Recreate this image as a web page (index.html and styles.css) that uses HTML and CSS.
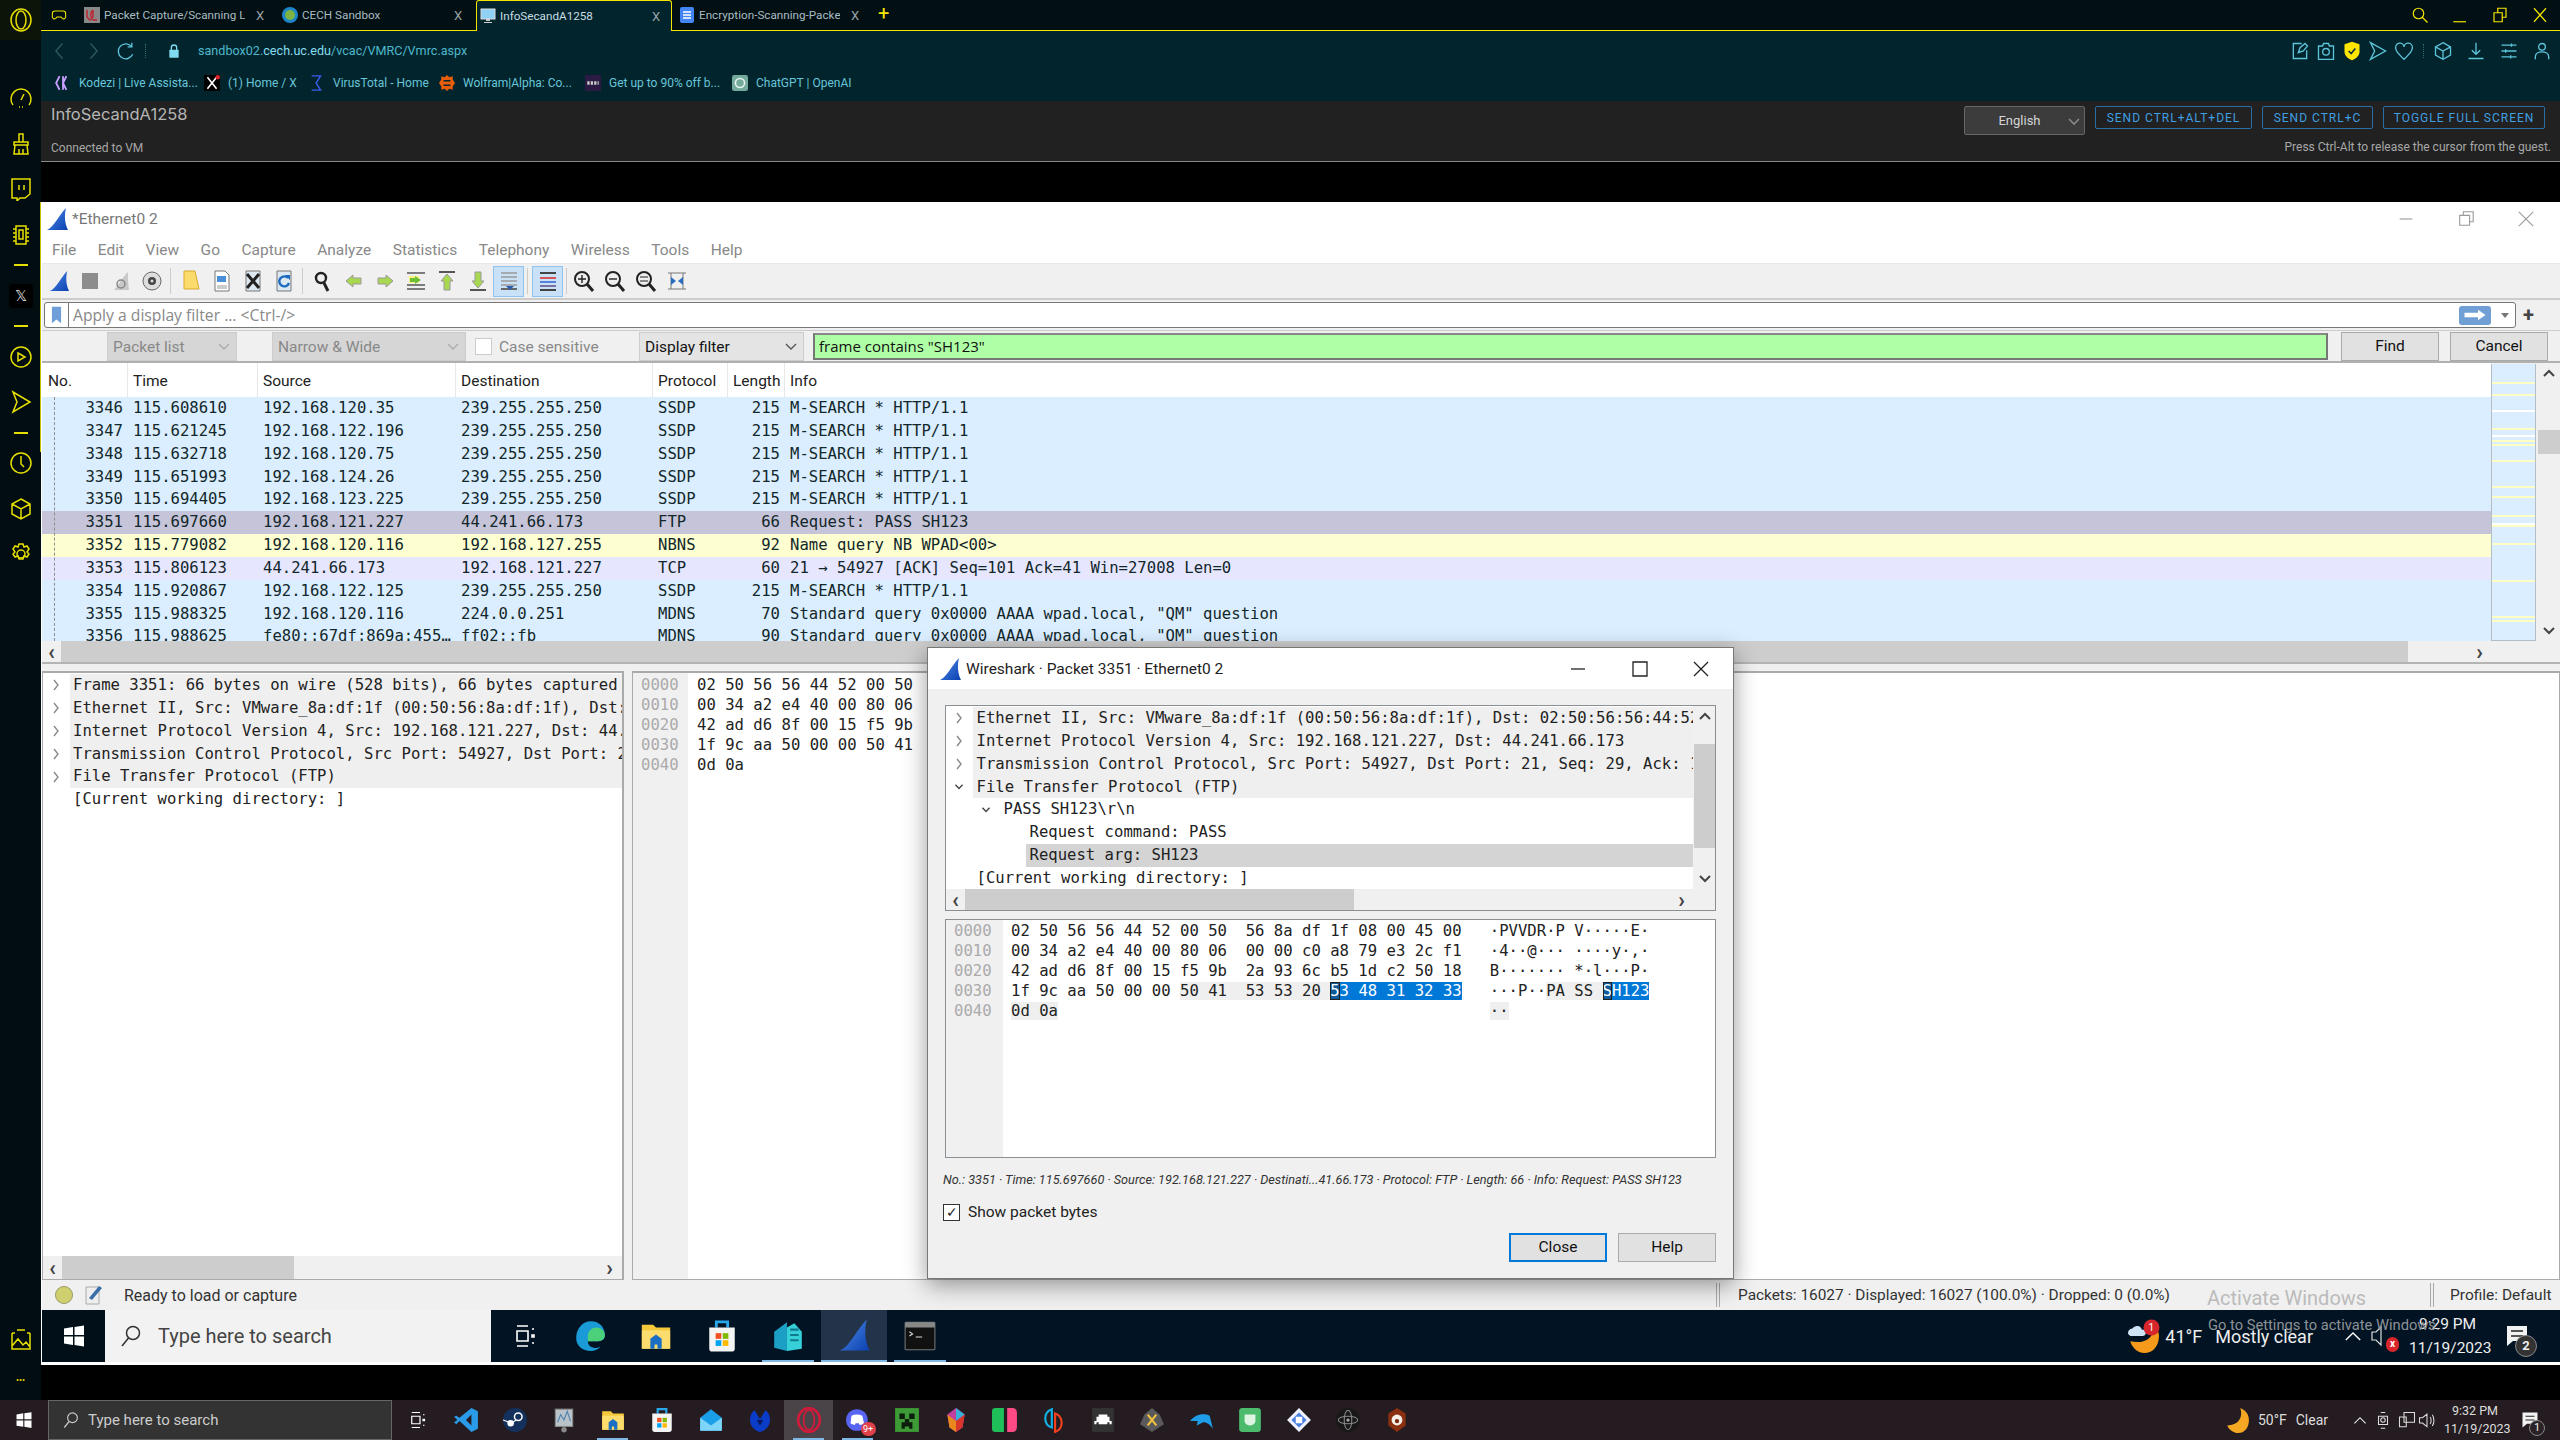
FILE: index.html
```html
<!DOCTYPE html>
<html>
<head>
    <title>InfoSecandA1258</title>
    <link rel="stylesheet" href="styles.css">
</head>
<body>
    <!-- shared icons -->
    <svg class="defs" width="0" height="0">
        <defs>
            <linearGradient id="finFill" x1="0" y1="0" x2="1" y2="1">
                <stop offset="0" stop-color="#4f8fe8"/>
                <stop offset="1" stop-color="#0a3fb0"/>
            </linearGradient>
            <symbol id="fin" viewBox="0 0 24 24"><path d="M2 23C9 20 14 8 21 1c-2 8-1 16 2 22z" fill="url(#finFill)"/></symbol>
            <symbol id="chevR" viewBox="0 0 10 14"><path d="M3 2l4 5-4 5" fill="none" stroke="#8a8a8a" stroke-width="1.4"/></symbol>
            <symbol id="chevD" viewBox="0 0 14 10"><path d="M2 2l5 5 5-5" fill="none" stroke="#444" stroke-width="2"/></symbol>
            <symbol id="chevU" viewBox="0 0 14 8"><path d="M2 7l5-5 5 5" fill="none" stroke="#444" stroke-width="2"/></symbol>
            <symbol id="win" viewBox="0 0 24 24"><path d="M2 4.5l9-1.4V11H2zM12.5 2.9L22 1.5V11h-9.5zM2 12.5h9v8.4l-9-1.4zM12.5 12.5H22v10l-9.5-1.4z" fill="#fff"/></symbol>
            <symbol id="glass" viewBox="0 0 24 24"><circle cx="14" cy="9" r="6.5" fill="none" stroke="currentColor" stroke-width="1.5"/><path d="M9.5 14L3 22" stroke="currentColor" stroke-width="1.6"/></symbol>
            <symbol id="folder" viewBox="0 0 24 24"><path d="M2 4h8l2 2h10v15H2z" fill="#f5c83c"/><path d="M2 8h20v13H2z" fill="#fbdc6c"/><path d="M8 14l4-3 4 3v7h-3v-3h-2v3H8z" fill="#1a6fc4"/></symbol>
            <symbol id="store" viewBox="0 0 24 24"><path d="M8 6V2h8v4" fill="none" stroke="#28a8ea" stroke-width="2"/><path d="M3 6h18v15a2 2 0 0 1-2 2H5a2 2 0 0 1-2-2z" fill="#f4f4f4"/><path d="M7.5 10h4v4h-4z" fill="#f25022"/><path d="M12.5 10h4v4h-4z" fill="#7fba00"/><path d="M7.5 15h4v4h-4z" fill="#00a4ef"/><path d="M12.5 15h4v4h-4z" fill="#ffb900"/></symbol>
            <symbol id="taskview" viewBox="0 0 24 24"><path d="M5 2h11M5 22h11M5 7h11v10H5zM20 5h2M20 11h2v2h-2zM20 19h2" fill="none" stroke="#fff" stroke-width="1.6"/></symbol>
            <symbol id="notif" viewBox="0 0 24 24"><path d="M2 2h20v15H8l-6 5z" fill="#f2f2f2"/><path d="M6 7h12M6 12h12" stroke="#222" stroke-width="1.4"/></symbol>
            <symbol id="moon" viewBox="0 0 24 24"><path d="M15 1C18 10 13 17 3 17C5 22 10 24 13 24C20 24 23 18 23 12C23 7 20 3 15 1Z" fill="#f5a623"/></symbol>
        </defs>
    </svg>

    <div class="desktop">
        <!-- opera side rail -->
        <div class="rail">
            <div class="rail-top">
                <svg class="rail-ico" viewBox="0 0 24 24"><ellipse cx="12" cy="12" rx="10" ry="11"/><ellipse cx="12" cy="12" rx="5" ry="9"/></svg>
            </div>
            <div class="rail-list">
                <div class="rail-group">
                    <svg class="rail-ico" viewBox="0 0 24 24"><path d="M4 19a10 10 0 1 1 16 0M12 14l3-6M10 21h1M13 21h1"/></svg>
                    <svg class="rail-ico" viewBox="0 0 24 24"><path d="M10 2h4v8h-4zM5 10h14v3H5zM6 13h12l1 9H5zM10 17v5M14 17v5"/></svg>
                    <svg class="rail-ico" viewBox="0 0 24 24"><path d="M3 2h18v15l-5 4h-5l-3 3v-3H3zM10 8v5M15 8v5"/></svg>
                    <svg class="rail-ico" viewBox="0 0 24 24"><path d="M7 3h10v18H7zM10 7h4v9h-4zM4 6h3M4 10h3M4 14h3M4 18h3M17 6h3M17 10h3M17 14h3M17 18h3"/></svg>
                </div>
                <div class="rail-dash"></div>
                <div class="rail-x">𝕏</div>
                <div class="rail-dash"></div>
                <div class="rail-group">
                    <svg class="rail-ico" viewBox="0 0 24 24"><circle cx="12" cy="12" r="10"/><path d="M9 8l7 4-7 4z"/></svg>
                    <svg class="rail-ico" viewBox="0 0 24 24"><path d="M4 2l17 10L4 22l4-10z"/></svg>
                </div>
                <div class="rail-dash"></div>
                <div class="rail-group">
                    <svg class="rail-ico" viewBox="0 0 24 24"><circle cx="12" cy="12" r="10"/><path d="M12 5v8l3 3"/></svg>
                    <svg class="rail-ico" viewBox="0 0 24 24"><path d="M12 2l9 5v10l-9 5-9-5V7zM3 7l9 5 9-5M12 12v10"/></svg>
                    <svg class="rail-ico" viewBox="0 0 24 24"><circle cx="12" cy="12" r="4"/><path d="M10 2h4l1 3 3-1 2 3-2 3 2 2-2 3-3-1-1 3h-4l-1-3-3 1-2-3 2-2-2-3 2-3 3 1z"/></svg>
                </div>
            </div>
            <div class="rail-bottom">
                <svg class="rail-ico" viewBox="0 0 24 24"><path d="M8 2h8M3 5v16h18V5M3 18l6-7 5 6 3-3 4 5M3 5h3M18 5h3"/></svg>
                <div class="rail-dots">•••</div>
            </div>
        </div>

        <div class="browser">
            <!-- tabs -->
            <div class="tabstrip">
                <div class="tab-space">
                    <svg class="ico-16 yellow-line" viewBox="0 0 24 24"><path d="M6 6h12a4 4 0 0 1 4 4v5a3 3 0 0 1-5 2l-2-2H9l-2 2a3 3 0 0 1-5-2v-5a4 4 0 0 1 4-4z"/></svg>
                </div>
                <div class="tab">
                    <svg class="ico-16" viewBox="0 0 16 16"><rect width="16" height="16" fill="#888"/><path d="M3 3v7l3 3 3-3V3M9 3c-3 2-3 8 0 10h4" fill="none" stroke="#c0202c" stroke-width="1.4"/></svg>
                    <span class="tab-title">Packet Capture/Scanning Lab</span><span class="tab-x">X</span>
                </div>
                <div class="tab">
                    <svg class="ico-16" viewBox="0 0 16 16"><circle cx="8" cy="8" r="8" fill="#1c86c8"/><circle cx="8" cy="8" r="5" fill="#7cb342"/></svg>
                    <span class="tab-title">CECH Sandbox</span><span class="tab-x">X</span>
                </div>
                <div class="tab tab-active">
                    <svg class="ico-16" viewBox="0 0 16 16"><rect x="1" y="1" width="14" height="10" fill="#8fd0f5" stroke="#ddd"/><path d="M6 11h4v2H6zM4 14h8v1H4z" fill="#ccc"/></svg>
                    <span class="tab-title">InfoSecandA1258</span><span class="tab-x">X</span>
                </div>
                <div class="tab">
                    <svg class="ico-16" viewBox="0 0 16 16"><rect x="1" width="14" height="16" rx="2" fill="#4285f4"/><path d="M4 5h8M4 8h8M4 11h8" stroke="#fff" stroke-width="1.4"/></svg>
                    <span class="tab-title">Encryption-Scanning-Packet</span><span class="tab-x">X</span>
                </div>
                <div class="tab-plus">+</div>
                <div class="win-btns">
                    <svg class="ico-18 yellow-line" viewBox="0 0 24 24"><circle cx="10" cy="10" r="7"/><path d="M15 15l7 7"/></svg>
                    <svg class="ico-18 yellow-line" viewBox="0 0 24 24"><path d="M3 21h17"/></svg>
                    <svg class="ico-18 yellow-line" viewBox="0 0 24 24"><path d="M4 9h11v12H4zM9 9V3h11v12h-5"/></svg>
                    <svg class="ico-18 yellow-line" viewBox="0 0 24 24"><path d="M4 3l16 18M20 3L4 21"/></svg>
                </div>
            </div>

            <!-- address + bookmarks -->
            <div class="navbox">
                <div class="nav-row">
                    <svg class="nav-ico dim" viewBox="0 0 24 24"><path d="M15 3l-8 9 8 9"/></svg>
                    <svg class="nav-ico dim" viewBox="0 0 24 24"><path d="M9 3l8 9-8 9"/></svg>
                    <svg class="nav-ico" viewBox="0 0 24 24"><path d="M19 7a9 9 0 1 0 1 9M19 2v5h-5"/></svg>
                    <div class="nav-sep"></div>
                    <svg class="ico-16 lock" viewBox="0 0 24 24"><path d="M8 11V7a4 4 0 0 1 8 0v4" fill="none" stroke="#7fdcf0" stroke-width="2"/><rect x="5" y="10" width="14" height="12" rx="1" fill="#7fdcf0"/></svg>
                    <span class="url">sandbox02.<b>cech.uc.edu</b>/vcac/VMRC/Vmrc.aspx</span>
                    <div class="nav-right">
                        <svg class="nav-ico" viewBox="0 0 24 24"><path d="M14 3H4v18h16V11M10 14l2-6 6-5 3 3-5 6z"/></svg>
                        <svg class="nav-ico" viewBox="0 0 24 24"><path d="M3 6h5l1-3h6l1 3h5v16H3z"/><circle cx="12" cy="13" r="4"/></svg>
                        <svg class="nav-ico" viewBox="0 0 24 24"><path d="M12 1l9 3v9c0 5-5 9-9 10-4-1-9-5-9-10V4z" fill="#ffe600" stroke="none"/><path d="M8 12l3 3 5-6" stroke="#12313a" stroke-width="2"/></svg>
                        <svg class="nav-ico" viewBox="0 0 24 24"><path d="M3 2l18 10L3 22l5-10z"/></svg>
                        <svg class="nav-ico" viewBox="0 0 24 24"><path d="M12 22C5 15 2 12 2 8a5 5 0 0 1 10-1 5 5 0 0 1 10 1c0 4-3 7-10 14z"/></svg>
                        <div class="nav-sep nav-sep-r"></div>
                        <svg class="nav-ico" viewBox="0 0 24 24"><path d="M12 2l9 5v10l-9 5-9-5V7zM3 7l9 5 9-5M12 12v10"/></svg>
                        <svg class="nav-ico nav-gap" viewBox="0 0 24 24"><path d="M12 2v14M7 11l5 5 5-5M3 21h18"/></svg>
                        <svg class="nav-ico nav-gap" viewBox="0 0 24 24"><path d="M3 5h18M3 12h18M3 19h18M15 3v4M8 10v4M14 17v4"/></svg>
                        <svg class="nav-ico nav-gap" viewBox="0 0 24 24"><circle cx="12" cy="7" r="4"/><path d="M4 22v-3c0-4 4-6 8-6s8 2 8 6v3"/></svg>
                    </div>
                </div>
                <div class="bookmarks">
                    <span class="bm bm-1"><svg class="ico-16" viewBox="0 0 14 14"><path d="M4 1L1 7l3 6M7 1v12M10 1L7 7l3 6" fill="none" stroke="#c9a0ff" stroke-width="1.6"/></svg>Kodezi | Live Assista...</span>
                    <span class="bm bm-2"><svg class="ico-16" viewBox="0 0 14 14"><rect width="14" height="14" fill="#000"/><path d="M3 2l8 10M11 2L3 12" stroke="#fff" stroke-width="1.4"/><circle cx="12" cy="2" r="2" fill="#e0252c"/></svg>(1) Home / X</span>
                    <span class="bm bm-3"><svg class="ico-16" viewBox="0 0 14 18"><path d="M1 1h10L6 9l5 8H1" fill="none" stroke="#3a5cf0" stroke-width="1.6"/></svg>VirusTotal - Home</span>
                    <span class="bm bm-4"><svg class="ico-16" viewBox="0 0 14 14"><path d="M7 0l2 2 3-1v3l2 3-2 3v3l-3-1-2 2-2-2-3 1v-3L0 7l2-3V1l3 1z" fill="#e85d0c"/><path d="M4 5h6M4 9h6" stroke="#02242c" stroke-width="1.4"/></svg>Wolfram|Alpha: Co...</span>
                    <span class="bm bm-5"><svg class="ico-16" viewBox="0 0 14 14"><rect width="14" height="14" fill="#2a1a44"/><path d="M2 7h10" stroke="#ccc" stroke-width="3" stroke-dasharray="2 1"/></svg>Get up to 90% off b...</span>
                    <span class="bm"><svg class="ico-16" viewBox="0 0 14 14"><rect width="14" height="14" rx="2" fill="#74aa9c"/><circle cx="7" cy="7" r="4" fill="none" stroke="#e8f4f0" stroke-width="1.4"/></svg>ChatGPT | OpenAI</span>
                </div>
            </div>

            <!-- vmrc header -->
            <div class="vmrc">
                <div class="vmrc-left">
                    <div class="vm-name">InfoSecandA1258</div>
                    <div class="vm-note">Connected to VM</div>
                </div>
                <div class="vmrc-right">
                    <div class="vmrc-actions">
                        <div class="lang">English<svg class="lang-caret" viewBox="0 0 14 10"><path d="M2 2l5 5 5-5" fill="none" stroke="#888" stroke-width="1.6"/></svg></div>
                        <div class="vm-btn vm-btn-1">SEND CTRL+ALT+DEL</div>
                        <div class="vm-btn vm-btn-2">SEND CTRL+C</div>
                        <div class="vm-btn vm-btn-3">TOGGLE FULL SCREEN</div>
                    </div>
                    <div class="vm-note vm-note-r">Press Ctrl-Alt to release the cursor from the guest.</div>
                </div>
            </div>

            <!-- the guest screen -->
            <div class="guest">
                <div class="ws">
                    <div class="ws-title">
                        <svg class="fin-22"><use href="#fin"/></svg>
                        <span class="ws-name">*Ethernet0 2</span>
                        <div class="ws-ctl">
                            <svg class="ctl" viewBox="0 0 20 20"><path d="M3 10h14"/></svg>
                            <svg class="ctl" viewBox="0 0 20 20"><path d="M3 6h11v11H3zM7 6V2h11v11h-4"/></svg>
                            <svg class="ctl" viewBox="0 0 20 20"><path d="M2 2l16 16M18 2L2 18"/></svg>
                        </div>
                    </div>
                    <div class="ws-menu">
                        <span>File</span><span>Edit</span><span>View</span><span>Go</span><span>Capture</span><span>Analyze</span><span>Statistics</span><span>Telephony</span><span>Wireless</span><span>Tools</span><span>Help</span>
                    </div>
                    <div class="ws-tools">
                        <div class="tb"><svg class="ico-22"><use href="#fin"/></svg></div>
                        <div class="tb"><svg class="ico-22" viewBox="0 0 22 22"><rect x="3" y="3" width="16" height="16" fill="#8d8d8d"/></svg></div>
                        <div class="tb"><svg class="ico-22" viewBox="0 0 22 22"><path d="M4 20C8 16 12 8 18 2c0 6 0 12 1 18z" fill="#c8c8c8"/><circle cx="11" cy="14" r="4" fill="none" stroke="#888" stroke-width="1.5"/></svg></div>
                        <div class="tb"><svg class="ico-22" viewBox="0 0 22 22"><circle cx="11" cy="11" r="9" fill="#ddd" stroke="#666"/><circle cx="11" cy="11" r="4" fill="#444"/><circle cx="11" cy="11" r="1.5" fill="#ddd"/></svg></div>
                        <div class="tb-sep"></div>
                        <div class="tb"><svg class="ico-22" viewBox="0 0 22 22"><path d="M4 1h11l4 18H4z" fill="#fbdb6b" stroke="#d9a92e"/></svg></div>
                        <div class="tb"><svg class="ico-22" viewBox="0 0 22 22"><path d="M4 1h10l4 4v16H4z" fill="#fff" stroke="#777"/><path d="M6 6h9v6H6z" fill="#4a90d9"/><path d="M6 15h10v4H6z" fill="#ccc"/></svg></div>
                        <div class="tb"><svg class="ico-22" viewBox="0 0 22 22"><path d="M4 1h14v20H4z" fill="#dde8f0" stroke="#777"/><path d="M5 4l12 14M17 4L5 18" stroke="#222" stroke-width="3"/></svg></div>
                        <div class="tb"><svg class="ico-22" viewBox="0 0 22 22"><path d="M4 1h14v20H4z" fill="#dde8f0" stroke="#777"/><path d="M15 8a5 5 0 1 0 1 5" fill="none" stroke="#1b6bc0" stroke-width="2.4"/><path d="M12 5h5v5z" fill="#1b6bc0"/></svg></div>
                        <div class="tb-sep"></div>
                        <div class="tb"><svg class="ico-22" viewBox="0 0 22 22"><circle cx="9" cy="8" r="5" fill="none" stroke="#222" stroke-width="2.4"/><path d="M12 13l4 8" stroke="#222" stroke-width="3"/></svg></div>
                        <div class="tb"><svg class="ico-22" viewBox="0 0 22 22"><path d="M3 11l7-6v3h8v6h-8v3z" fill="#a8d850" stroke="#999"/></svg></div>
                        <div class="tb"><svg class="ico-22" viewBox="0 0 22 22"><path d="M19 11l-7-6v3H4v6h8v3z" fill="#a8d850" stroke="#999"/></svg></div>
                        <div class="tb"><svg class="ico-22" viewBox="0 0 22 22"><path d="M2 3h18M2 19h18M2 15h18" stroke="#555" stroke-width="1.6"/><path d="M4 6h10v7H4z" fill="#fff27a"/><path d="M16 10l-6-4v2H5v4h5v2z" fill="#6cbf3a"/></svg></div>
                        <div class="tb"><svg class="ico-22" viewBox="0 0 22 22"><path d="M3 2h16" stroke="#555" stroke-width="2"/><path d="M11 4l6 7h-3v9H8v-9H5z" fill="#a8d850" stroke="#999"/></svg></div>
                        <div class="tb"><svg class="ico-22" viewBox="0 0 22 22"><path d="M3 20h16" stroke="#555" stroke-width="2"/><path d="M11 18l6-7h-3V2H8v9H5z" fill="#a8d850" stroke="#999"/></svg></div>
                        <div class="tb tb-on"><svg class="ico-22" viewBox="0 0 22 22"><path d="M3 3h16M3 7h16M3 11h16M3 15h16" stroke="#999" stroke-width="1.6"/><path d="M3 19h16" stroke="#666" stroke-width="2"/><path d="M8 16h8l-4 4z" fill="#2a5db0"/></svg></div>
                        <div class="tb-sep"></div>
                        <div class="tb tb-on"><svg class="ico-22" viewBox="0 0 22 22"><path d="M3 3h16" stroke="#444" stroke-width="2"/><path d="M3 8h16" stroke="#d8525a" stroke-width="2"/><path d="M3 12h16" stroke="#5a7fd8" stroke-width="2"/><path d="M3 16h16" stroke="#7a6fa0" stroke-width="2"/><path d="M3 20h16" stroke="#444" stroke-width="2"/></svg></div>
                        <div class="tb-sep tb-sep-s"></div>
                        <div class="tb"><svg class="ico-22" viewBox="0 0 22 22"><circle cx="9" cy="9" r="7" fill="#eee" stroke="#222" stroke-width="2"/><path d="M14 14l6 7" stroke="#222" stroke-width="3"/><path d="M5 9h8M9 5v8" stroke="#222" stroke-width="1.4"/></svg></div>
                        <div class="tb"><svg class="ico-22" viewBox="0 0 22 22"><circle cx="9" cy="9" r="7" fill="#eee" stroke="#222" stroke-width="2"/><path d="M14 14l6 7" stroke="#222" stroke-width="3"/><path d="M5 9h8" stroke="#222" stroke-width="1.4"/></svg></div>
                        <div class="tb"><svg class="ico-22" viewBox="0 0 22 22"><circle cx="9" cy="9" r="7" fill="#eee" stroke="#222" stroke-width="2"/><path d="M14 14l6 7" stroke="#222" stroke-width="3"/><path d="M5 7h8M5 11h8" stroke="#222" stroke-width="1.2"/></svg></div>
                        <div class="tb"><svg class="ico-22" viewBox="0 0 22 22"><path d="M2 3h18M2 19h18M5 3v16M17 3v16" stroke="#777"/><path d="M10 11L5 7v8zM12 11l5-4v8z" fill="#2a6dc0"/></svg></div>
                    </div>

                    <div class="filterbar">
                        <div class="filter-input">
                            <svg class="bm-mark" viewBox="0 0 12 18"><path d="M1 0h10v18l-5-4-5 4z" fill="#6e9fd8"/></svg>
                            <span class="filter-text">Apply a display filter ... &lt;Ctrl-/&gt;</span>
                            <div class="apply"><svg viewBox="0 0 32 16" class="apply-arrow"><path d="M2 5h18V1l10 7-10 7v-4H2z" fill="#fff"/></svg></div>
                            <div class="filter-caret"></div>
                        </div>
                        <div class="filter-plus">+</div>
                    </div>

                    <div class="findbar">
                        <div class="combo combo-off combo-a">Packet list<svg class="combo-caret" viewBox="0 0 14 10"><path d="M2 2l5 5 5-5" fill="none" stroke="#aaa" stroke-width="1.4"/></svg></div>
                        <div class="combo combo-off combo-b">Narrow &amp; Wide<svg class="combo-caret" viewBox="0 0 14 10"><path d="M2 2l5 5 5-5" fill="none" stroke="#aaa" stroke-width="1.4"/></svg></div>
                        <div class="check-off"></div>
                        <span class="case-label">Case sensitive</span>
                        <div class="combo combo-c">Display filter<svg class="combo-caret" viewBox="0 0 14 10"><path d="M2 2l5 5 5-5" fill="none" stroke="#555" stroke-width="1.4"/></svg></div>
                        <div class="find-input">frame contains "SH123"</div>
                        <div class="push push-find">Find</div>
                        <div class="push push-cancel">Cancel</div>
                    </div>

                    <!-- packet list -->
                    <div class="packets">
                        <div class="pk-main">
                            <div class="pk-head">
                                <span class="hd-no">No.</span><span>Time</span><span>Source</span><span>Destination</span><span>Protocol</span><span>Length</span><span class="hd-info">Info</span>
                            </div>
                            <div class="pk-body mono">
                                <div class="pk"><span class="r">3346</span><span>115.608610</span><span>192.168.120.35</span><span>239.255.255.250</span><span>SSDP</span><span class="r">215</span><span>M-SEARCH * HTTP/1.1</span></div>
                                <div class="pk"><span class="r">3347</span><span>115.621245</span><span>192.168.122.196</span><span>239.255.255.250</span><span>SSDP</span><span class="r">215</span><span>M-SEARCH * HTTP/1.1</span></div>
                                <div class="pk"><span class="r">3348</span><span>115.632718</span><span>192.168.120.75</span><span>239.255.255.250</span><span>SSDP</span><span class="r">215</span><span>M-SEARCH * HTTP/1.1</span></div>
                                <div class="pk"><span class="r">3349</span><span>115.651993</span><span>192.168.124.26</span><span>239.255.255.250</span><span>SSDP</span><span class="r">215</span><span>M-SEARCH * HTTP/1.1</span></div>
                                <div class="pk"><span class="r">3350</span><span>115.694405</span><span>192.168.123.225</span><span>239.255.255.250</span><span>SSDP</span><span class="r">215</span><span>M-SEARCH * HTTP/1.1</span></div>
                                <div class="pk pk-sel"><span class="r">3351</span><span>115.697660</span><span>192.168.121.227</span><span>44.241.66.173</span><span>FTP</span><span class="r">66</span><span>Request: PASS SH123</span></div>
                                <div class="pk pk-nbns"><span class="r">3352</span><span>115.779082</span><span>192.168.120.116</span><span>192.168.127.255</span><span>NBNS</span><span class="r">92</span><span>Name query NB WPAD&lt;00&gt;</span></div>
                                <div class="pk pk-tcp"><span class="r">3353</span><span>115.806123</span><span>44.241.66.173</span><span>192.168.121.227</span><span>TCP</span><span class="r">60</span><span>21 → 54927 [ACK] Seq=101 Ack=41 Win=27008 Len=0</span></div>
                                <div class="pk"><span class="r">3354</span><span>115.920867</span><span>192.168.122.125</span><span>239.255.255.250</span><span>SSDP</span><span class="r">215</span><span>M-SEARCH * HTTP/1.1</span></div>
                                <div class="pk"><span class="r">3355</span><span>115.988325</span><span>192.168.120.116</span><span>224.0.0.251</span><span>MDNS</span><span class="r">70</span><span>Standard query 0x0000 AAAA wpad.local, "QM" question</span></div>
                                <div class="pk"><span class="r">3356</span><span>115.988625</span><span>fe80::67df:869a:455…</span><span>ff02::fb</span><span>MDNS</span><span class="r">90</span><span>Standard query 0x0000 AAAA wpad.local, "QM" question</span></div>
                            </div>
                        </div>
                        <div class="pk-map"></div>
                        <div class="vscroll vscroll-main">
                            <svg class="sb-arrow"><use href="#chevU"/></svg>
                            <div class="vs-track"><div class="vs-thumb"></div></div>
                            <svg class="sb-arrow sb-flip"><use href="#chevU"/></svg>
                        </div>
                    </div>
                    <div class="hscroll hscroll-main">
                        <span class="arr">‹</span><div class="hs-thumb hs-thumb-main"></div><span class="arr arr-r">›</span>
                    </div>

                    <!-- details and bytes -->
                    <div class="panes">
                        <div class="pane-tree">
                            <div class="tree-rows mono">
                                <div class="tr tr-on"><svg class="tw"><use href="#chevR"/></svg><span>Frame 3351: 66 bytes on wire (528 bits), 66 bytes captured (528 bits) on interface</span></div>
                                <div class="tr tr-on"><svg class="tw"><use href="#chevR"/></svg><span>Ethernet II, Src: VMware_8a:df:1f (00:50:56:8a:df:1f), Dst: 02:50:56:56:44:52</span></div>
                                <div class="tr tr-on"><svg class="tw"><use href="#chevR"/></svg><span>Internet Protocol Version 4, Src: 192.168.121.227, Dst: 44.241.66.173</span></div>
                                <div class="tr tr-on"><svg class="tw"><use href="#chevR"/></svg><span>Transmission Control Protocol, Src Port: 54927, Dst Port: 21, Seq: 29, Ack: 1</span></div>
                                <div class="tr tr-on"><svg class="tw"><use href="#chevR"/></svg><span>File Transfer Protocol (FTP)</span></div>
                                <div class="tr"><span class="tw"></span><span>[Current working directory: ]</span></div>
                            </div>
                            <div class="hscroll hscroll-tree">
                                <span class="arr">‹</span><div class="hs-thumb hs-thumb-tree"></div><span class="arr arr-r">›</span>
                            </div>
                        </div>
                        <div class="pane-bytes">
                            <div class="hex-off mono">0000<br>0010<br>0020<br>0030<br>0040</div>
                            <div class="hex-body mono">02 50 56 56 44 52 00 50  56 8a df 1f 08 00 45 00<br>00 34 a2 e4 40 00 80 06  00 00 c0 a8 79 e3 2c f1<br>42 ad d6 8f 00 15 f5 9b  2a 93 6c b5 1d c2 50 18<br>1f 9c aa 50 00 00 50 41  53 53 20 53 48 31 32 33<br>0d 0a</div>
                        </div>
                    </div>

                    <div class="status">
                        <div class="led"></div>
                        <svg class="ico-22" viewBox="0 0 22 22"><path d="M3 3h13v17H3z" fill="#eee" stroke="#aaa"/><path d="M6 14L16 2l3 2L9 16z" fill="#3a6ea8"/></svg>
                        <span class="st-ready">Ready to load or capture</span>
                        <div class="st-sep"></div>
                        <span class="st-packets">Packets: 16027 · Displayed: 16027 (100.0%) · Dropped: 0 (0.0%)</span>
                        <span class="st-activate">Activate Windows</span>
                        <div class="st-sep st-sep-2"></div>
                        <span class="st-profile">Profile: Default</span>
                    </div>

                    <!-- guest taskbar -->
                    <div class="vm-task">
                        <div class="vm-start"><svg class="ico-24"><use href="#win"/></svg></div>
                        <div class="vm-search"><svg class="ico-24 dark"><use href="#glass"/></svg><span>Type here to search</span></div>
                        <div class="vm-app"><svg class="ico-24"><use href="#taskview"/></svg></div>
                        <div class="vm-app"><svg class="ico-34" viewBox="0 0 32 32"><path d="M3 18C3 9 9 2 17 2c8 0 13 6 13 13 0 4-3 6-8 6h-8c0 5 5 8 12 5-3 3-6 4-9 4-8 0-14-5-14-12z" fill="#1a9bd8"/><path d="M14 16c0-5 4-8 8-8 4 0 8 3 8 7 0 4-3 6-8 6h-8z" fill="#4cd07a"/></svg></div>
                        <div class="vm-app"><svg class="ico-34"><use href="#folder"/></svg></div>
                        <div class="vm-app"><svg class="ico-34"><use href="#store"/></svg></div>
                        <div class="vm-app vm-app-run"><svg class="ico-34" viewBox="0 0 32 32"><path d="M3 12l12-9v27l-12-3z" fill="#1c9fc4"/><path d="M15 8l7-4 7 8v16l-14 2z" fill="#35d0d8"/><path d="M18 10h8M18 15h8M18 20h8" stroke="#127a90" stroke-width="2"/></svg></div>
                        <div class="vm-app vm-app-on"><svg class="ico-34"><use href="#fin"/></svg></div>
                        <div class="vm-app vm-app-run"><svg class="ico-34" viewBox="0 0 32 32"><rect x="2" y="3" width="28" height="26" rx="1" fill="#111" stroke="#777"/><path d="M2 3h28v5H2z" fill="#888"/><path d="M6 12l3 2-3 2M12 17h6" stroke="#ddd" fill="none"/></svg></div>
                        <div class="vm-tray">
                            <span class="vm-weather"><svg class="ico-34" viewBox="0 0 32 32"><path d="M26 6C27 18 17 24 4 21C6 28 12 32 17 32C26 32 31 25 31 16C31 12 29 8 26 6Z" fill="#f59a1a"/><path d="M2 14a4 4 0 0 1 4-5 5 5 0 0 1 9 1 3 3 0 0 1 1 6H4z" fill="#cfe3f7"/><circle cx="24" cy="8" r="7.5" fill="#d7262c"/></svg><span class="wx-badge">1</span></span>
                            <span class="wx-temp">41°F</span>
                            <span class="wx-text">Mostly clear</span>
                            <svg class="vm-caret" viewBox="0 0 20 12"><path d="M2 10l8-8 8 8" fill="none" stroke="#fff" stroke-width="1.5"/></svg>
                            <span class="vm-sound"><svg class="ico-24" viewBox="0 0 24 24"><path d="M3 8h4l5-5v18l-5-5H3z" fill="none" stroke="#ddd" stroke-width="1.2"/></svg><span class="x-badge">x</span></span>
                            <div class="vm-clock"><div>9:29 PM</div><div>11/19/2023</div></div>
                            <span class="vm-notif"><svg class="ico-24"><use href="#notif"/></svg><span class="n-badge">2</span></span>
                        </div>
                    </div>

                    <!-- over the taskbar, as the real watermark is -->
                    <div class="go-settings">Go to Settings to activate Windows.</div>

                    <!-- packet dialog -->
                    <div class="dlg">
                        <div class="dlg-title">
                            <svg class="fin-22"><use href="#fin"/></svg>
                            <span class="dlg-name">Wireshark · Packet 3351 · Ethernet0 2</span>
                            <div class="dlg-ctl">
                                <svg class="ctl-d" viewBox="0 0 20 20"><path d="M3 10h14"/></svg>
                                <svg class="ctl-d" viewBox="0 0 20 20"><path d="M3 3h14v14H3z"/></svg>
                                <svg class="ctl-d" viewBox="0 0 20 20"><path d="M3 3l14 14M17 3L3 17"/></svg>
                            </div>
                        </div>
                        <div class="dlg-body">
                            <div class="dlg-tree">
                                <div class="dlg-rows">
                                    <div class="dlg-lines mono">
                                        <div class="tr tr-on"><svg class="tw"><use href="#chevR"/></svg><span>Ethernet II, Src: VMware_8a:df:1f (00:50:56:8a:df:1f), Dst: 02:50:56:56:44:52</span></div>
                                        <div class="tr tr-on"><svg class="tw"><use href="#chevR"/></svg><span>Internet Protocol Version 4, Src: 192.168.121.227, Dst: 44.241.66.173</span></div>
                                        <div class="tr tr-on"><svg class="tw"><use href="#chevR"/></svg><span>Transmission Control Protocol, Src Port: 54927, Dst Port: 21, Seq: 29, Ack: 1</span></div>
                                        <div class="tr tr-on"><svg class="tw"><use href="#chevD"/></svg><span>File Transfer Protocol (FTP)</span></div>
                                        <div class="tr tr-sub"><svg class="tw"><use href="#chevD"/></svg><span>PASS SH123\r\n</span></div>
                                        <div class="tr tr-sub2"><span>Request command: PASS</span></div>
                                        <div class="tr tr-sub2 tr-sel"><span>Request arg: SH123</span></div>
                                        <div class="tr"><span class="tw"></span><span>[Current working directory: ]</span></div>
                                    </div>
                                    <div class="vscroll vscroll-dlg">
                                        <svg class="sb-arrow"><use href="#chevU"/></svg>
                                        <div class="vs-track"><div class="vs-thumb"></div></div>
                                        <svg class="sb-arrow sb-flip"><use href="#chevU"/></svg>
                                    </div>
                                </div>
                                <div class="hscroll hscroll-dlg">
                                    <span class="arr">‹</span><div class="hs-thumb hs-thumb-dlg"></div><span class="arr arr-r">›</span>
                                </div>
                            </div>
                            <div class="dlg-hex mono">
                                <div class="hex-off hex-off-d">0000<br>0010<br>0020<br>0030<br>0040</div>
                                <div class="hex-body hex-body-d">02 50 56 56 44 52 00 50  56 8a df 1f 08 00 45 00   ·PVVDR·P V·····E·
00 34 a2 e4 40 00 80 06  00 00 c0 a8 79 e3 2c f1   ·4··@··· ····y·,·
42 ad d6 8f 00 15 f5 9b  2a 93 6c b5 1d c2 50 18   B······· *·l···P·
1f 9c aa 50 00 00 <i class="hl-grey">50 41  53 53 20 </i><i class="hl-blue"><i class="hl-cur">5</i>3 48 31 32 33</i>   ···P··<i class="hl-grey">PA SS </i><i class="hl-blue"><i class="hl-cur">S</i>H123</i>
<i class="hl-grey">0d 0a</i>                                              <i class="hl-grey">··</i></div>
                            </div>
                            <div class="dlg-info">No.: 3351 · Time: 115.697660 · Source: 192.168.121.227 · Destinati...41.66.173 · Protocol: FTP · Length: 66 · Info: Request: PASS SH123</div>
                            <div class="dlg-check"><span class="checkbox">✓</span>Show packet bytes</div>
                            <div class="dlg-btns">
                                <div class="push push-close">Close</div>
                                <div class="push push-help">Help</div>
                            </div>
                        </div>
                    </div>
                </div>
                <div class="guest-black"></div>
            </div>
        </div>
    </div>

    <!-- host taskbar -->
    <div class="host-task">
        <div class="host-start"><svg class="ico-18"><use href="#win"/></svg></div>
        <div class="host-search"><svg class="ico-18"><use href="#glass"/></svg><span>Type here to search</span></div>
        <div class="host-apps">
            <div class="ha"><svg class="ico-18"><use href="#taskview"/></svg></div>
            <div class="ha"><svg class="ico-26" viewBox="0 0 24 24"><path d="M17 1l6 3v16l-6 3L6 13l-3 3-2-2 3-2-3-3 2-1 3 2zM17 7l-5 5 5 5z" fill="#2a9be8"/></svg></div>
            <div class="ha"><svg class="ico-26" viewBox="0 0 24 24"><circle cx="12" cy="12" r="11" fill="#14305c"/><circle cx="15" cy="9" r="3.5" fill="none" stroke="#fff" stroke-width="1.4"/><circle cx="8" cy="15" r="3" fill="#fff"/><path d="M1 12l8 3 4-3" stroke="#fff" fill="none"/></svg></div>
            <div class="ha"><svg class="ico-26" viewBox="0 0 24 24"><rect x="4" y="2" width="16" height="16" fill="#b9c3c9" stroke="#888"/><path d="M6 14l3-7 3 5 3-8 3 9" fill="none" stroke="#4a7fb0"/><circle cx="12" cy="21" r="2.5" fill="#888"/></svg></div>
            <div class="ha ha-run"><svg class="ico-26"><use href="#folder"/></svg></div>
            <div class="ha"><svg class="ico-26"><use href="#store"/></svg></div>
            <div class="ha"><svg class="ico-26" viewBox="0 0 24 24"><path d="M2 10l10-8 10 8v12H2z" fill="#1a9ee8"/><path d="M2 10l10 7 10-7v12H2z" fill="#7fd4fa"/></svg></div>
            <div class="ha"><svg class="ico-26" viewBox="0 0 24 24"><path d="M7 3l5 8 5-8c3 2 5 6 4 11s-5 8-9 9c-4-1-8-4-9-9S4 5 7 3z" fill="#0a3cc8"/><path d="M9 12l3 5 3-5" fill="#041a5c"/></svg></div>
            <div class="ha ha-on"><svg class="ico-26" viewBox="0 0 24 24"><ellipse cx="12" cy="12" rx="10" ry="11" fill="none" stroke="#d01a3c" stroke-width="2.4"/><ellipse cx="12" cy="12" rx="5" ry="9" fill="none" stroke="#d01a3c" stroke-width="1.6"/></svg></div>
            <div class="ha ha-run"><span class="discord"><svg class="ico-26" viewBox="0 0 24 24"><circle cx="11" cy="12" r="10" fill="#5865f2"/><path d="M6 8c3-1.5 7-1.5 10 0l1.5 7c-2 1.5-3 1.5-4 1.5l-.7-1.5h-3l-.7 1.5c-1 0-2 0-4-1.5z" fill="#fff"/></svg><span class="d-badge">9+</span></span></div>
            <div class="ha"><svg class="ico-26" viewBox="0 0 24 24"><rect x="1" y="1" width="22" height="22" fill="#3e9a36"/><path d="M5 6h5v5H5zM14 6h5v5h-5zM10 11h4v3h3v6h-3v-2h-4v2H7v-6h3z" fill="#0d1f0c"/></svg></div>
            <div class="ha"><svg class="ico-26" viewBox="0 0 24 24"><path d="M12 1l8 6-2 12-6 4-6-4-2-12z" fill="#c040a0"/><path d="M12 1l8 6-8 6z" fill="#38b0d8"/><path d="M4 7l8 6v10l-6-4z" fill="#e8881c"/><path d="M12 13l8-6-2 12-6 4z" fill="#d8362c"/></svg></div>
            <div class="ha"><svg class="ico-26" viewBox="0 0 24 24"><path d="M3 1h8v22H3a3 3 0 0 1-3-3V4a3 3 0 0 1 3-3z" fill="#1fbf5a"/><path d="M14 1h5a4 4 0 0 1 4 4v14a4 4 0 0 1-4 4h-5z" fill="#ff4a86"/></svg></div>
            <div class="ha"><svg class="ico-26" viewBox="0 0 24 24"><path d="M10 2a9 9 0 0 0 0 17z" fill="none" stroke="#10b0e0" stroke-width="2"/><path d="M13 6a9 9 0 0 1 0 17z" fill="none" stroke="#f0401c" stroke-width="2"/></svg></div>
            <div class="ha"><svg class="ico-26" viewBox="0 0 24 24"><rect x="2" y="1" width="20" height="22" fill="#333"/><path d="M6 9h2V7h8v2h2v4h2v3h-2v-2h-2v2H8v-2H6v2H4v-3h2z" fill="#fff"/></svg></div>
            <div class="ha"><svg class="ico-26" viewBox="0 0 24 24"><path d="M12 1l7 6 4 9-11 7-11-7 4-9z" fill="#5a5a5a"/><path d="M8 7l8 10M16 7L8 17" stroke="#f0c040" stroke-width="2"/></svg></div>
            <div class="ha"><svg class="ico-26" viewBox="0 0 24 24"><path d="M2 13c4-6 12-8 18-5l3 12c-3-4-5-6-9-6l-6 3 1-4c-3 0-5 0-7 0z" fill="#1f9de8"/></svg></div>
            <div class="ha"><svg class="ico-26" viewBox="0 0 24 24"><rect x="2" y="1" width="20" height="22" rx="3" fill="#4cbb6c"/><path d="M7 7h10v6c0 2-2 4-5 4s-5-2-5-4z" fill="#dff5e4"/></svg></div>
            <div class="ha"><svg class="ico-26" viewBox="0 0 24 24"><path d="M12 1l11 11-11 11L1 12z" fill="#eef2ff"/><path d="M12 5l7 7-7 7-7-7z" fill="#4a7fe0"/><path d="M9 9h6v6H9z" fill="#fff"/></svg></div>
            <div class="ha"><svg class="ico-26" viewBox="0 0 24 24"><circle cx="12" cy="12" r="11" fill="#181818"/><ellipse cx="12" cy="12" rx="9" ry="3.5" fill="none" stroke="#888"/><ellipse cx="12" cy="12" rx="3.5" ry="9" fill="none" stroke="#888"/><circle cx="12" cy="12" r="1.5" fill="#aaa"/></svg></div>
            <div class="ha"><svg class="ico-26" viewBox="0 0 24 24"><path d="M12 1l8 5v11l-8 6-8-6V6z" fill="#8a2f10"/><circle cx="12" cy="12" r="5" fill="#f4f0e8"/><circle cx="12" cy="13" r="2" fill="#7a2a10"/></svg></div>
        </div>
        <div class="host-tray">
            <svg class="ico-26"><use href="#moon"/></svg>
            <span class="host-temp">50°F</span>
            <span class="host-wx">Clear</span>
            <svg class="host-caret" viewBox="0 0 20 12"><path d="M2 10l8-8 8 8" fill="none" stroke="#eee" stroke-width="1.6"/></svg>
            <svg class="ico-18 tray-line tray-cam" viewBox="0 0 24 24"><path d="M6 7h12v11H6zM9 2h6M9 23h6"/><circle cx="12" cy="12" r="3"/></svg>
            <svg class="ico-18 tray-line tray-net" viewBox="0 0 24 24"><path d="M8 2h14v13H8zM2 8h9v13H2zM6 21h0"/></svg>
            <svg class="ico-18 tray-line tray-vol" viewBox="0 0 24 24"><path d="M2 9h4l6-5v17l-6-5H2zM16 8c2 2 2 7 0 9M19 5c3 4 3 11 0 15"/></svg>
            <div class="host-clock"><div>9:32 PM</div><div>11/19/2023</div></div>
            <span class="host-notif"><svg class="ico-18"><use href="#notif"/></svg><span class="n-badge n-badge-s">1</span></span>
        </div>
    </div>
</body>
</html>
```

FILE: styles.css
```css
* {
    box-sizing: border-box;
}

body {
    margin: 0;
    width: 2560px;
    height: 1440px;
    overflow: hidden;
    background-color: #000;
    font-family: Roboto, Arial, sans-serif;
    display: flex;
    flex-direction: column;
}

.defs {
    position: absolute;
}

.mono {
    font-family: "DejaVu Sans Mono", "Liberation Mono", monospace;
    font-size: 15.6px;
    color: #222;
}

.ico-16 { width: 16px; height: 16px; flex: none; }
.ico-18 { width: 18px; height: 18px; flex: none; }
.ico-22 { width: 22px; height: 22px; flex: none; }
.ico-24 { width: 24px; height: 24px; flex: none; }
.ico-26 { width: 26px; height: 26px; flex: none; }
.ico-34 { width: 34px; height: 34px; flex: none; }

.yellow-line {
    fill: none;
    stroke: #f2e600;
    stroke-width: 1.6;
}

.desktop {
    display: flex;
    height: 1400px;
}

/* side rail */
.rail {
    width: 41px;
    flex: none;
    background-color: #010d11;
    display: flex;
    flex-direction: column;
    align-items: center;
}

.rail-top {
    width: 100%;
    height: 40px;
    background-color: #0c140a;
    display: flex;
    align-items: center;
    justify-content: center;
}

.rail-ico {
    width: 24px;
    height: 24px;
    fill: none;
    stroke: #e6de00;
    stroke-width: 1.5;
    flex: none;
}

.rail-list {
    margin-top: 46px;
    display: flex;
    flex-direction: column;
    align-items: center;
    gap: 17.5px;
}

.rail-group {
    display: flex;
    flex-direction: column;
    gap: 21.5px;
}

.rail-dash {
    width: 14px;
    height: 2px;
    background-color: #e6de00;
}

.rail-x {
    width: 24px;
    height: 24px;
    background-color: #000;
    color: #ddd;
    border-radius: 4px;
    font-size: 15px;
    line-height: 24px;
    text-align: center;
}

.rail-bottom {
    margin-top: auto;
    margin-bottom: 16px;
    display: flex;
    flex-direction: column;
    align-items: center;
    gap: 24px;
}

.rail-dots {
    color: #e6de00;
    font-size: 9px;
    line-height: 8px;
}

.browser {
    flex: 1;
    display: flex;
    flex-direction: column;
    min-width: 0;
}

/* tabs */
.tabstrip {
    height: 31px;
    flex: none;
    display: flex;
    align-items: stretch;
    background-color: #020f13;
    border-bottom: 1px solid #f2e600;
}

.tab-space {
    width: 39px;
    display: flex;
    align-items: center;
    padding-left: 10px;
}

.tab {
    width: 198px;
    display: flex;
    align-items: center;
    padding-left: 4px;
    gap: 4px;
    color: #a9bcc2;
    font-size: 11.7px;
}

.tab-title {
    width: 141px;
    overflow: hidden;
    white-space: nowrap;
}

.tab-x {
    font-size: 13px;
    color: #99a5a8;
    margin-left: 7px;
}

.tab-active {
    height: 31px;
    background-color: #02242c;
    border: 1px solid #f2e600;
    border-bottom: none;
    border-radius: 3px 3px 0 0;
    padding-left: 3px;
    color: #c8dde2;
    width: 196px;
}

.tab-active + .tab {
    padding-left: 7px;
}

.tab-plus {
    color: #f2e600;
    font-size: 20px;
    margin-left: 8px;
    line-height: 26px;
}

.win-btns {
    margin-left: auto;
    width: 149px;
    padding-right: 11px;
    display: flex;
    align-items: center;
    justify-content: space-between;
}

/* address bar */
.navbox {
    height: 70px;
    flex: none;
    background-color: #02242c;
}

.nav-row {
    height: 39px;
    display: flex;
    align-items: center;
    padding-left: 9px;
    gap: 13px;
}

.nav-ico {
    width: 20px;
    height: 20px;
    fill: none;
    stroke: #5cc4da;
    stroke-width: 1.6;
    flex: none;
}

.nav-ico.dim {
    stroke: #2d5a64;
}

.nav-sep {
    width: 1px;
    height: 14px;
    border-left: 1px dotted #2f6a70;
    margin: 0 0 0 -4px;
}

.lock {
    margin-left: 7px;
    margin-right: 3px;
}

.url {
    color: #4fb8cc;
    font-size: 12.6px;
}

.url b {
    font-weight: 400;
    color: #85dff0;
}

.nav-right {
    margin-left: auto;
    display: flex;
    align-items: center;
    gap: 6px;
    padding-right: 8px;
}

.nav-sep-r {
    margin: 0 3px;
}

.nav-gap {
    margin-left: 7px;
}

.bookmarks {
    height: 26px;
    display: flex;
    align-items: center;
    padding-left: 14px;
    color: #67c6d9;
    font-size: 12px;
}

.bm {
    display: flex;
    align-items: center;
    gap: 8px;
    white-space: nowrap;
    width: 154px;
}

.bm-1 { width: 149px; }
.bm-2 { width: 105px; }
.bm-3 { width: 130px; }
.bm-4 { width: 146px; }
.bm-5 { width: 147px; }

/* vmrc head */
.vmrc {
    height: 61px;
    flex: none;
    background-color: #212121;
    border-bottom: 1px solid #888;
    display: flex;
    justify-content: space-between;
    padding: 5px 9px 0 10px;
}

.vmrc-left {
    display: flex;
    flex-direction: column;
}

.vm-name {
    color: #b5b5b5;
    font-size: 16.5px;
    font-family: Inter, Roboto, sans-serif;
    line-height: 16px;
    height: 31px;
}

.vm-note {
    color: #a8a8a8;
    font-size: 12px;
    line-height: 16px;
    margin-top: 3px;
}

.vmrc-right {
    display: flex;
    flex-direction: column;
    align-items: flex-end;
}

.vmrc-actions {
    display: flex;
    gap: 10px;
    height: 29px;
    margin-right: 6px;
    align-items: flex-start;
}

.lang {
    width: 121px;
    height: 29px;
    background-color: #3c3c3c;
    border: 1px solid #666;
    border-radius: 2px;
    color: #d5d5d5;
    font-size: 13px;
    line-height: 28px;
    text-align: center;
    padding-right: 10px;
    position: relative;
}

.lang-caret {
    position: absolute;
    right: 3px;
    top: 10px;
    width: 14px;
    height: 10px;
}

.vm-btn {
    height: 23px;
    border: 1px solid #2a6ea8;
    border-radius: 2px;
    color: #3f9fe0;
    font-size: 12px;
    letter-spacing: 1px;
    line-height: 22px;
    text-align: center;
    white-space: nowrap;
}

.vm-btn-1 { width: 157px; }
.vm-btn-2 { width: 111px; }
.vm-btn-3 { width: 162px; }

.vm-note-r {
    margin-top: 4px;
}

/* guest area */
.guest {
    flex: 1;
    display: flex;
    flex-direction: column;
    padding-top: 40px;
}

.guest-black {
    flex: 1;
}

.ws {
    height: 1163px;
    flex: none;
    position: relative;
    display: flex;
    flex-direction: column;
    background-color: #f0f0f0;
    border-left: 1px solid #fff;
    border-bottom: 3px solid #fff;
    font-size: 15.5px;
    color: #222;
}

.ws::before {
    content: "";
    position: absolute;
    left: -2px;
    top: 0;
    width: 1px;
    height: 250px;
    background-color: #c8c000;
}

.ws-title {
    height: 33px;
    flex: none;
    background-color: #fff;
    display: flex;
    align-items: center;
    padding-left: 3px;
}

.fin-22 {
    width: 24px;
    height: 24px;
    flex: none;
}

.ws-name {
    margin-left: 3px;
    color: #777;
}

.ws-ctl {
    margin-left: auto;
    width: 163px;
    padding-right: 25px;
    display: flex;
    justify-content: space-between;
}

.ctl {
    width: 18px;
    height: 18px;
    fill: none;
    stroke: #999;
    stroke-width: 1.2;
}

.ws-menu {
    height: 28px;
    flex: none;
    background-color: #fff;
    display: flex;
    align-items: center;
    padding: 1px 0 0 10px;
    gap: 21.5px;
    color: #888;
}

.ws-tools {
    height: 37px;
    flex: none;
    display: flex;
    align-items: center;
    padding-left: 1px;
    border-top: 1px solid #e8e8e8;
    border-bottom: 2px solid #ccc;
}

.tb {
    width: 31px;
    height: 31px;
    flex: none;
    display: flex;
    align-items: center;
    justify-content: center;
}

.tb-on {
    background-color: #c9e1f7;
    border: 1px solid #8fc3f0;
}

.tb-sep {
    width: 8px;
    height: 26px;
    flex: none;
    position: relative;
}

.tb-sep::after {
    content: "";
    position: absolute;
    left: 3px;
    top: 0;
    bottom: 0;
    border-left: 1px solid #ccc;
}

.tb-sep-s {
    width: 5px;
}

/* filter */
.filterbar {
    height: 31px;
    flex: none;
    display: flex;
    align-items: center;
    padding-left: 2px;
    border-bottom: 1px solid #ccc;
}

.filter-input {
    width: 2472px;
    height: 26px;
    background-color: #fff;
    border: 1px solid #777;
    border-radius: 3px;
    display: flex;
    align-items: center;
}

.bm-mark {
    width: 24px;
    height: 24px;
    flex: none;
    padding: 3px 6px;
    border-right: 1px solid #777;
}

.filter-text {
    margin-left: 4px;
    color: #888;
    font-family: "Open Sans", Roboto, sans-serif;
    font-size: 15.7px;
}

.apply {
    margin-left: auto;
    width: 32px;
    height: 19px;
    background-color: #6f9fd4;
    border-radius: 3px;
    display: flex;
    align-items: center;
    justify-content: center;
}

.apply-arrow {
    width: 24px;
    height: 12px;
}

.filter-caret {
    margin: 0 6px 0 10px;
    border-left: 4px solid transparent;
    border-right: 4px solid transparent;
    border-top: 5px solid #777;
}

.filter-plus {
    margin-left: 7px;
    font-size: 20px;
    font-weight: 700;
    color: #444;
    line-height: 22px;
}

/* find bar */
.findbar {
    height: 32px;
    flex: none;
    display: flex;
    align-items: center;
    padding: 1px 0 0 65px;
    border-bottom: 2px solid #b0b0b0;
}

.combo {
    height: 29px;
    display: flex;
    align-items: center;
    padding-left: 5px;
    position: relative;
    border: 1px solid #ccc;
    background-color: #e4e4e4;
}

.combo-off {
    background-color: #d6d6d6;
    color: #888;
}

.combo-a { width: 130px; }
.combo-b { width: 194px; margin-left: 35px; }
.combo-c { width: 165px; margin-left: 42px; color: #111; }

.combo-caret {
    position: absolute;
    right: 5px;
    top: 9px;
    width: 14px;
    height: 10px;
}

.check-off {
    width: 17px;
    height: 17px;
    margin-left: 9px;
    background-color: #fff;
    border: 1px solid #ccc;
}

.case-label {
    width: 98px;
    margin-left: 7px;
    color: #888;
    white-space: nowrap;
}

.find-input {
    width: 1515px;
    height: 27px;
    margin-left: 9px;
    background-color: #afffa6;
    border: 2px solid #777;
    border-top-color: #888;
    padding-left: 4px;
    line-height: 22px;
    font-family: "Open Sans", Roboto, sans-serif;
    font-size: 15px;
    color: #111;
}

.push {
    height: 29px;
    border: 1px solid #aaa;
    background-color: #e1e1e1;
    line-height: 27px;
    text-align: center;
    color: #111;
    width: 98px;
}

.push-find { margin-left: 13px; }
.push-cancel { margin-left: 11px; }

/* packet list */
.packets {
    height: 278px;
    flex: none;
    display: flex;
    background-color: #f0f0f0;
}

.pk-main {
    width: 2449px;
    flex: none;
    display: flex;
    flex-direction: column;
    background-color: #fff;
    overflow: hidden;
}

.pk-head,
.pk {
    display: grid;
    grid-template-columns: 86px 130px 198px 197px 75px 57px 1fr;
}

.pk-head {
    height: 34px;
    flex: none;
    background-color: #fff;
    color: #222;
}

.pk-head span {
    line-height: 36px;
    padding-left: 5px;
    border-right: 1px solid #e8e8e8;
    overflow: hidden;
    white-space: nowrap;
}

.pk-head .hd-no {
    padding-left: 6px;
}

.pk-head .hd-info {
    border-right: none;
}

.pk-body {
    position: relative;
    flex: 1;
    overflow: hidden;
}

.pk-body::before {
    content: "";
    position: absolute;
    left: 12px;
    top: 0;
    bottom: 0;
    border-left: 1px dashed #8c8c8c;
}

.pk {
    height: 22.85px;
    line-height: 22.85px;
    background-color: #daeeff;
    color: #12272a;
}

.pk span {
    padding-left: 5px;
    overflow: hidden;
    white-space: nowrap;
}

.pk .r {
    padding: 0 5px 0 0;
    text-align: right;
}

.pk-sel { background-color: #c6c4d8; }
.pk-nbns { background-color: #feffd0; }
.pk-tcp { background-color: #e7e6ff; }

.pk-map {
    width: 45px;
    flex: none;
    margin-top: 1px;
    border: 1px solid #b4bcc4;
    border-top: none;
    background-image: linear-gradient(to bottom,
        #daeeff 18px, #ffffc4 18px 20px, #daeeff 20px 30px, #ffffc4 30px 32px,
        #daeeff 32px 46px, #fff 46px 48px, #daeeff 48px 64px, #ffffc4 64px 66px,
        #daeeff 66px 71px, #fff 71px 73px, #daeeff 73px 76px, #ffffc4 76px 78px,
        #daeeff 78px 80px, #ffffc4 80px 82px, #daeeff 82px 96px, #ffffc4 96px 98px,
        #daeeff 98px 122px, #ffffc4 122px 124px, #daeeff 124px 132px, #ffffc4 132px 134px,
        #daeeff 134px 151px, #ffffc4 151px 153px, #daeeff 153px 159px, #fff 159px 161px,
        #ffffc4 161px 163px, #daeeff 163px 179px, #ffffc4 179px 181px, #daeeff 181px 216px,
        #ffffc4 216px 218px, #daeeff 218px 252px, #ffffc4 252px 254px, #daeeff 254px 256px,
        #ffffc4 256px 258px, #daeeff 258px);
}

.vscroll {
    display: flex;
    flex-direction: column;
    align-items: center;
    background-color: #f0f0f0;
    flex: none;
}

.vscroll-main {
    width: 24px;
    margin-left: 1px;
}

.vs-track {
    flex: 1;
    width: 100%;
    position: relative;
}

.vs-thumb {
    position: absolute;
    left: 1px;
    right: 1px;
    background-color: #cdcdcd;
}

.vscroll-main .vs-thumb {
    top: 47px;
    height: 24px;
}

.sb-arrow {
    width: 14px;
    height: 20px;
    flex: none;
    padding: 6px 0;
}

.sb-flip {
    transform: scaleY(-1);
}

.hscroll {
    height: 22px;
    flex: none;
    display: flex;
    align-items: center;
    position: relative;
    background-color: #f0f0f0;
}

.arr {
    width: 19px;
    flex: none;
    text-align: center;
    font-size: 22px;
    font-weight: 700;
    line-height: 18px;
    color: #444;
}

.arr-r {
    position: absolute;
}

.hs-thumb {
    height: 100%;
    background-color: #cdcdcd;
}

.hscroll-main { border-bottom: 2px solid #b4b4b4; height: 23px; }
.hs-thumb-main { width: 2347px; }
.hscroll-main .arr-r { left: 2428px; }

/* details and bytes */
.panes {
    height: 609px;
    margin-top: 7px;
    flex: none;
    display: flex;
    gap: 8px;
}

.pane-tree {
    width: 582px;
    flex: none;
    border: 1px solid #aaa;
    border-top: 2px solid #aaa;
    border-right: 2px solid #aaa;
    background-color: #fff;
    display: flex;
    flex-direction: column;
}

.tree-rows {
    flex: 1;
    overflow: hidden;
    padding-top: 1px;
}

.tr {
    height: 22.85px;
    line-height: 22.85px;
    display: flex;
    align-items: center;
    overflow: hidden;
    color: #222;
    white-space: nowrap;
}

.tr > span:last-child {
    flex: 1;
    padding-left: 3px;
}

.tw {
    width: 27px;
    height: 14px;
    flex: none;
    padding-left: 8px;
    padding-right: 9px;
}

.tr-on > span {
    background-color: #efefef;
}

.hscroll-tree {
    height: 23px;
}

.hs-thumb-tree { width: 232px; }
.hscroll-tree .arr-r { left: 557px; }

.pane-bytes {
    flex: 1;
    border: 1px solid #aaa;
    border-top: 2px solid #aaa;
    background-color: #fff;
    display: flex;
}

.hex-off {
    width: 55px;
    flex: none;
    background-color: #f0f0f0;
    color: #aaa;
    padding: 2px 0 0 8px;
    line-height: 20.1px;
}

.hex-body {
    flex: 1;
    padding: 2px 0 0 9px;
    line-height: 20.1px;
    white-space: pre;
}

/* status */
.status {
    height: 30px;
    flex: none;
    display: flex;
    align-items: center;
    padding-left: 13px;
    color: #333;
}

.led {
    width: 18px;
    height: 18px;
    border-radius: 50%;
    background-color: #cfcf70;
    border: 1px solid #9a9a66;
    margin-right: 10px;
}

.st-ready {
    margin-left: 19px;
    white-space: nowrap;
    font-size: 16px;
}

.st-sep {
    width: 4px;
    height: 24px;
    border-left: 1px solid #aaa;
    border-right: 1px solid #aaa;
    margin-left: auto;
}

.st-packets {
    margin-left: 18px;
    width: 469px;
    white-space: nowrap;
    font-size: 15.4px;
}

.st-activate {
    width: 223px;
    font-size: 20px;
    color: #bbb;
    white-space: nowrap;
    padding-top: 6px;
}

.st-sep-2 {
    margin-left: 0;
}

.st-profile {
    margin-left: 16px;
    width: 110px;
    white-space: nowrap;
}

/* guest taskbar */
.vm-task {
    height: 52px;
    flex: none;
    background-color: #021424;
    display: flex;
    align-items: center;
    color: #eee;
}

.vm-start {
    width: 63px;
    height: 100%;
    display: flex;
    align-items: center;
    justify-content: center;
    background-color: #011018;
    flex: none;
}

.vm-search {
    width: 386px;
    height: 100%;
    background-color: #f2f2f2;
    display: flex;
    align-items: center;
    padding-left: 14px;
    gap: 15px;
    color: #444;
    font-size: 20px;
    flex: none;
}

.dark {
    color: #333;
}

.vm-app {
    width: 66px;
    height: 100%;
    display: flex;
    align-items: center;
    justify-content: center;
    flex: none;
}

.vm-app-on {
    background-color: #23344a;
    border-bottom: 2px solid #7fb8e4;
}

.vm-app-run {
    position: relative;
}

.vm-app-run::after {
    content: "";
    position: absolute;
    left: 7px;
    right: 7px;
    bottom: 0;
    height: 2px;
    background-color: #7fb8e4;
}

.vm-tray {
    margin-left: auto;
    display: flex;
    align-items: center;
    padding-right: 31px;
    height: 100%;
}

.vm-weather {
    position: relative;
    display: flex;
}

.wx-badge {
    position: absolute;
    left: 18px;
    top: 3px;
    width: 14px;
    text-align: center;
    color: #fff;
    font-size: 10px;
    line-height: 12px;
}

.wx-temp {
    margin-left: 5px;
    font-size: 18px;
}

.wx-text {
    margin-left: 13px;
    font-size: 18px;
}

.vm-caret {
    width: 18px;
    height: 11px;
    margin-left: 31px;
}

.vm-sound {
    position: relative;
    display: flex;
    margin-left: 7px;
    width: 24px;
}

.x-badge {
    position: absolute;
    right: -6px;
    bottom: -4px;
    width: 13px;
    height: 15px;
    border-radius: 7px;
    background-color: #d8262c;
    color: #fff;
    font-size: 10px;
    font-weight: 700;
    line-height: 13px;
    text-align: center;
}

.vm-clock {
    margin-left: 16px;
    width: 77px;
    text-align: center;
    font-size: 15.5px;
    line-height: 24px;
}

.vm-notif {
    position: relative;
    display: flex;
    margin-left: 19px;
}

.n-badge {
    position: absolute;
    right: -8px;
    bottom: -9px;
    width: 22px;
    height: 22px;
    border-radius: 50%;
    border: 1px solid #888;
    background-color: #333;
    color: #eee;
    font-size: 13px;
    font-weight: 700;
    line-height: 20px;
    text-align: center;
}

.go-settings {
    position: absolute;
    left: 2166px;
    bottom: 28px;
    font-size: 14.7px;
    color: #8d9296;
    white-space: nowrap;
}

/* packet dialog */
.dlg {
    position: absolute;
    left: 885px;
    top: 445px;
    width: 807px;
    height: 632px;
    background-color: #f0f0f0;
    border: 1px solid #777;
    box-shadow: 0 6px 22px rgba(0, 0, 0, 0.4);
    display: flex;
    flex-direction: column;
}

.dlg-title {
    height: 41px;
    flex: none;
    background-color: #fff;
    display: flex;
    align-items: center;
    padding-left: 10px;
}

.dlg-name {
    margin-left: 4px;
    color: #222;
}

.dlg-ctl {
    margin-left: auto;
    width: 143px;
    margin-right: 22px;
    display: flex;
    justify-content: space-between;
}

.ctl-d {
    width: 20px;
    height: 20px;
    fill: none;
    stroke: #222;
    stroke-width: 1.3;
}

.dlg-body {
    flex: 1;
    padding: 16px 17px 0 17px;
    display: flex;
    flex-direction: column;
}

.dlg-tree {
    height: 206px;
    flex: none;
    border: 1px solid #8a8f94;
    background-color: #f0f0f0;
    display: flex;
    flex-direction: column;
}

.dlg-rows {
    flex: 1;
    display: flex;
    overflow: hidden;
}

.dlg-lines {
    width: 747px;
    flex: none;
    background-color: #fff;
    overflow: hidden;
    padding-top: 1px;
}

.dlg-lines .tr > span:last-child {
    padding-left: 3.5px;
}

.tr-sub {
    padding-left: 27px;
}

.tr-sub2 {
    padding-left: 80px;
}

.tr-sel > span {
    background-color: #d4d4d4;
}

.vscroll-dlg {
    width: 23px;
}

.vscroll-dlg .vs-thumb {
    top: 18px;
    height: 104px;
}

.hscroll-dlg {
    height: 21px;
}

.hs-thumb-dlg { width: 389px; }
.hscroll-dlg .arr-r { left: 726px; }

.dlg-hex {
    height: 239px;
    flex: none;
    margin-top: 8px;
    border: 1px solid #8a8f94;
    background-color: #fff;
    display: flex;
}

.hex-off-d {
    width: 57px;
    padding: 1px 0 0 8px;
}

.hex-body-d {
    padding: 1px 0 0 8px;
}

.hl-grey {
    font-style: normal;
    background-color: #efefef;
}

.hl-blue {
    font-style: normal;
    background-color: #0078d7;
    color: #fff;
}

.hl-cur {
    font-style: normal;
    background-color: #0a5a9c;
    outline: 1px solid #222;
    outline-offset: -1px;
    color: #fff;
}

.dlg-info {
    margin-top: 14px;
    font-size: 12.7px;
    font-style: italic;
    color: #333;
    white-space: nowrap;
    line-height: 16px;
    margin-left: -2px;
}

.dlg-check {
    display: flex;
    align-items: center;
    margin-top: 15px;
    margin-left: -2px;
    color: #222;
    gap: 8px;
}

.checkbox {
    width: 17px;
    height: 17px;
    background-color: #fff;
    border: 1px solid #333;
    font-size: 14px;
    line-height: 15px;
    text-align: center;
}

.dlg-btns {
    display: flex;
    justify-content: flex-end;
    gap: 11px;
    margin-top: 12px;
}

.push-close {
    border: 2px solid #0078d7;
    line-height: 25px;
}

/* host taskbar */
.host-task {
    height: 40px;
    flex: none;
    background-color: #241c20;
    display: flex;
    align-items: center;
    color: #ddd;
}

.host-start {
    width: 48px;
    display: flex;
    justify-content: center;
    flex: none;
}

.host-search {
    width: 344px;
    height: 40px;
    flex: none;
    background-color: #333;
    border: 1px solid #666;
    display: flex;
    align-items: center;
    padding-left: 13px;
    gap: 8px;
    font-size: 15px;
    color: #ccc;
}

.host-apps {
    display: flex;
    height: 100%;
}

.ha {
    width: 49px;
    height: 100%;
    flex: none;
    display: flex;
    align-items: center;
    justify-content: center;
    position: relative;
}

.ha-on {
    background-color: #4a4448;
}

.ha-run::after,
.ha-on::after {
    content: "";
    position: absolute;
    left: 9px;
    right: 9px;
    bottom: 0;
    height: 2px;
    background-color: #7fb8e4;
}

.discord {
    position: relative;
    display: flex;
}

.d-badge {
    position: absolute;
    right: -5px;
    bottom: -3px;
    min-width: 15px;
    height: 14px;
    border-radius: 7px;
    background-color: #e0404a;
    color: #fff;
    font-size: 9px;
    line-height: 14px;
    text-align: center;
}

.host-tray {
    margin-left: auto;
    display: flex;
    align-items: center;
    padding-right: 21px;
    height: 100%;
}

.host-temp {
    margin-left: 8px;
    font-size: 14px;
}

.host-wx {
    margin-left: 9px;
    font-size: 14px;
}

.host-caret {
    width: 14px;
    height: 9px;
    margin-left: 25px;
}

.tray-line {
    fill: none;
    stroke: #ddd;
    stroke-width: 1.4;
}

.tray-cam { margin-left: 7px; }
.tray-net { margin-left: 6px; }
.tray-vol { margin-left: 2px; }

.host-clock {
    width: 62px;
    margin-left: 8px;
    font-size: 12.5px;
    line-height: 18px;
    text-align: center;
}

.host-notif {
    position: relative;
    display: flex;
    margin-left: 15px;
}

.n-badge-s {
    width: 16px;
    height: 16px;
    font-size: 11px;
    line-height: 14px;
    font-weight: 400;
    right: -6px;
    bottom: -7px;
    background-color: #2a2226;
}
```
